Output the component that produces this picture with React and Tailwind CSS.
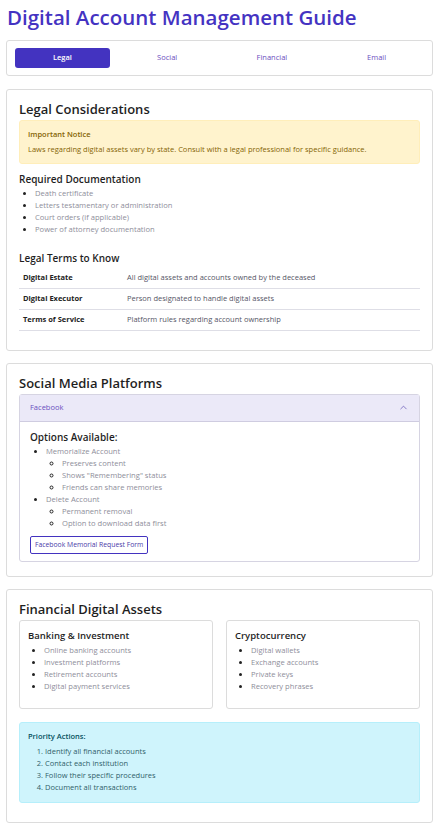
import { ChevronUp } from 'lucide-react'

const tabs = ['Legal', 'Social', 'Financial', 'Email']

const requiredDocs = [
  'Death certificate',
  'Letters testamentary or administration',
  'Court orders (if applicable)',
  'Power of attorney documentation',
]

const terms = [
  ['Digital Estate', 'All digital assets and accounts owned by the deceased'],
  ['Digital Executor', 'Person designated to handle digital assets'],
  ['Terms of Service', 'Platform rules regarding account ownership'],
]

const banking = ['Online banking accounts', 'Investment platforms', 'Retirement accounts', 'Digital payment services']
const crypto = ['Digital wallets', 'Exchange accounts', 'Private keys', 'Recovery phrases']
const priority = ['Identify all financial accounts', 'Contact each institution', 'Follow their specific procedures', 'Document all transactions']

const Section = ({ title, children }) => (
  <section className="rounded-[3px] border border-[#dcdcdc] bg-white px-[12px] pt-[11px] pb-[14px]">
    <h2 className="text-[13px] font-semibold leading-[16px] text-[#1f1f1f]">{title}</h2>
    {children}
  </section>
)

const BulletList = ({ items }) => (
  <ul className="list-disc pl-[16px] text-[7.6px] leading-[12px] text-[#8e8e9a] marker:text-[#222]">
    {items.map((item) => (
      <li key={item}>{item}</li>
    ))}
  </ul>
)

export default function App() {
  return (
    <div className="min-h-screen bg-white pl-[6px] pr-[4px] pt-[4px] pb-[12px] font-['Open_Sans',sans-serif] text-[#222]">
      <h1 className="ml-[1px] text-[20.5px] font-semibold leading-[27px] text-[#4433c2]">Digital Account Management Guide</h1>

      <div className="mt-[9px] rounded-[3px] border border-[#dcdcdc] bg-white px-[8px] py-[7px]">
        <div className="grid grid-cols-4 gap-[10px]">
          {tabs.map((tab, i) => (
            <button
              key={tab}
              type="button"
              className={
                i === 0
                  ? 'h-[20px] rounded-[3px] bg-[#4333c0] text-[7.5px] font-semibold text-white'
                  : 'h-[20px] rounded-[3px] text-[7.5px] text-[#6c4fc0]'
              }
            >
              {tab}
            </button>
          ))}
        </div>
      </div>

      <div className="mt-[13px] space-y-[12px]">
        <Section title="Legal Considerations">
          <div className="mt-[3px] rounded-[3px] border border-[#ffeeba] bg-[#fff3cd] px-[8px] pt-[7px] pb-[8px] text-[#856404]">
            <p className="text-[7.5px] font-semibold leading-[12px]">Important Notice</p>
            <p className="mt-[3px] text-[7.5px] leading-[12px]">
              Laws regarding digital assets vary by state. Consult with a legal professional for specific guidance.
            </p>
          </div>

          <h3 className="mt-[8px] text-[10px] font-semibold leading-[14px] text-[#1f1f1f]">Required Documentation</h3>
          <div className="mt-[1px]">
            <BulletList items={requiredDocs} />
          </div>

          <h3 className="mt-[16px] text-[10px] font-semibold leading-[14px] text-[#1f1f1f]">Legal Terms to Know</h3>
          <table className="mt-[2px] w-full text-[7.5px]">
            <tbody>
              {terms.map(([term, desc]) => (
                <tr key={term} className="border-b border-[#dedee6]">
                  <td className="w-[108px] px-[4px] py-0 h-[21px] font-bold text-[#222]">{term}</td>
                  <td className="h-[21px] text-[#555566]">{desc}</td>
                </tr>
              ))}
            </tbody>
          </table>
          <div className="h-[5px]" />
        </Section>

        <Section title="Social Media Platforms">
          <div className="mt-[3px] rounded-[3px] border border-[#d6d4e2]">
            <div className="flex h-[27px] items-center justify-between border-b border-[#cfcce0] bg-[#ebe9f8] pl-[10px] pr-[10px]">
              <span className="text-[7.5px] text-[#6a4fc0]">Facebook</span>
              <ChevronUp className="h-[11px] w-[11px] text-[#5a4bb0]" strokeWidth={1.5} />
            </div>
            <div className="px-[10px] pt-[8px] pb-[7px]">
              <h4 className="text-[10px] font-semibold leading-[14px] text-[#1f1f1f]">Options Available:</h4>
              <ul className="mt-[1px] list-disc pl-[16px] text-[7.6px] leading-[12px] text-[#8e8e9a] marker:text-[#222]">
                <li>
                  Memorialize Account
                  <ul className="list-[circle] pl-[16px]">
                    <li>Preserves content</li>
                    <li>Shows "Remembering" status</li>
                    <li>Friends can share memories</li>
                  </ul>
                </li>
                <li>
                  Delete Account
                  <ul className="list-[circle] pl-[16px]">
                    <li>Permanent removal</li>
                    <li>Option to download data first</li>
                  </ul>
                </li>
              </ul>
              <button
                type="button"
                className="mt-[7px] h-[18px] rounded-[2px] border border-[#4333c0] bg-white px-[4px] text-[6.8px] text-[#4a3aa8]"
              >
                Facebook Memorial Request Form
              </button>
            </div>
          </div>
        </Section>

        <Section title="Financial Digital Assets">
          <div className="mt-[3px] grid grid-cols-2 gap-[13px]">
            {[
              ['Banking & Investment', banking],
              ['Cryptocurrency', crypto],
            ].map(([title, items]) => (
              <div key={title} className="h-[89px] rounded-[3px] border border-[#dcdcdc] px-[8px] pt-[8px]">
                <h4 className="text-[9.5px] font-semibold leading-[14px] text-[#1f1f1f]">{title}</h4>
                <div className="mt-[1px]">
                  <BulletList items={items} />
                </div>
              </div>
            ))}
          </div>

          <div className="mt-[13px] rounded-[3px] border border-[#b6effb] bg-[#cff4fc] px-[8px] pt-[7px] pb-[9px] text-[#055160]">
            <p className="text-[7.5px] font-semibold leading-[12px]">Priority Actions:</p>
            <ol className="mt-[3px] list-decimal pl-[17px] text-[7.5px] leading-[12px] text-[#2f5f6a]">
              {priority.map((item) => (
                <li key={item}>{item}</li>
              ))}
            </ol>
          </div>
          <div className="h-[5px]" />
        </Section>
      </div>
    </div>
  )
}
